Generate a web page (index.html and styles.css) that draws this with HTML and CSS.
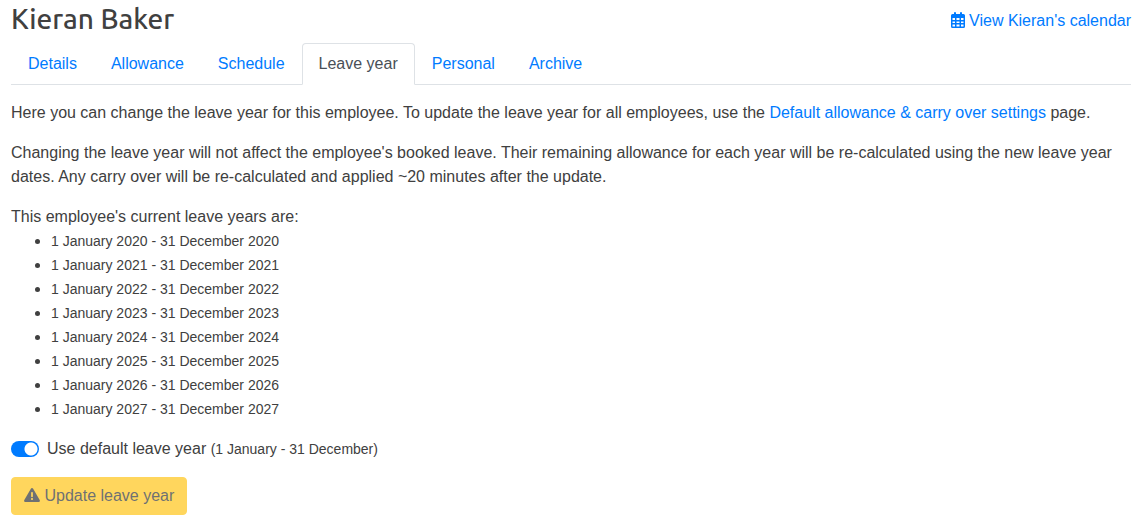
FILE: index.html
```html
<!DOCTYPE html>
<html lang="en">
<head>
    <meta charset="utf-8">
    <meta name="viewport" content="width=device-width, initial-scale=1">
    <title>Kieran Baker - Leave year</title>
    <link rel="stylesheet" href="styles.css">
</head>
<body>
    <header class="page-header">
        <h1>Kieran Baker</h1>
        <a class="calendar-link" href="#calendar">
            <svg class="icon-calendar" viewBox="0 0 14 16" aria-hidden="true">
                <path fill="currentColor" fill-rule="evenodd" d="M3 1a1 1 0 0 1 2 0v1h4V1a1 1 0 0 1 2 0v1h1.500A1.500 1.500 0 0 1 14 3.500V14.500a1.500 1.500 0 0 1-1.500 1.500h-11A1.500 1.500 0 0 1 0 14.500V3.500A1.500 1.500 0 0 1 1.500 2H3zM1.500 6v2H4V6zM5.500 6v2h3V6zM10 6v2h2.500V6zM1.500 9.500v1.500H4V9.500zM5.500 9.500v1.500h3V9.500zM10 9.500v1.500h2.500V9.500zM1.500 12.500v2H4v-2zM5.500 12.500v2h3v-2zM10 12.500v2h2.500v-2z"/>
            </svg>
            View Kieran's calendar
        </a>
    </header>

    <nav class="tabs">
        <a class="tab" href="#details">Details</a>
        <a class="tab" href="#allowance">Allowance</a>
        <a class="tab" href="#schedule">Schedule</a>
        <a class="tab active" href="#leave-year" aria-current="page">Leave year</a>
        <a class="tab" href="#personal">Personal</a>
        <a class="tab" href="#archive">Archive</a>
    </nav>

    <main>
        <p>Here you can change the leave year for this employee. To update the leave year for all employees, use the <a href="#settings">Default allowance &amp; carry over settings</a> page.</p>
        <p>Changing the leave year will not affect the employee's booked leave. Their remaining allowance for each year will be re-calculated using the new leave year dates. Any carry over will be re-calculated and applied ~20 minutes after the update.</p>

        <div>This employee's current leave years are:</div>
        <ul class="leave-years">
            <li><small>1 January 2020 - 31 December 2020</small></li>
            <li><small>1 January 2021 - 31 December 2021</small></li>
            <li><small>1 January 2022 - 31 December 2022</small></li>
            <li><small>1 January 2023 - 31 December 2023</small></li>
            <li><small>1 January 2024 - 31 December 2024</small></li>
            <li><small>1 January 2025 - 31 December 2025</small></li>
            <li><small>1 January 2026 - 31 December 2026</small></li>
            <li><small>1 January 2027 - 31 December 2027</small></li>
        </ul>

        <form>
            <div class="switch">
                <input type="checkbox" id="default-year" checked>
                <label for="default-year">Use default leave year <small>(1 January - 31 December)</small></label>
            </div>
            <button class="btn" type="submit" disabled>
                <svg class="icon-warning" viewBox="0 0 576 512" aria-hidden="true">
                    <path fill="currentColor" d="M569.500 440c18.500 32-4.700 72-41.600 72H48.100c-36.900 0-60-40.100-41.600-72L246.400 24c18.500-32 64.700-32 83.200 0l239.900 416zM288 370c-20 0-36 16-36 36s16 36 36 36 36-16 36-36-16-36-36-36zm-32-202v144c0 14 12 24 32 24s32-10 32-24V168c0-14-12-24-32-24s-32 10-32 24z"/>
                </svg>
                Update leave year
            </button>
        </form>
    </main>
</body>
</html>
```
FILE: styles.css
```css
* {
    box-sizing: border-box;
}

body {
    margin: 0;
    padding: 2px 7px 12px 11px;
    background: #fff;
    color: #404040;
    font-family: "Liberation Sans", Arial, sans-serif;
    font-size: 16px;
    line-height: 24px;
}

a {
    color: #007bff;
    text-decoration: none;
}

a:hover {
    text-decoration: underline;
}

small {
    font-size: 14px;
}

.page-header {
    display: flex;
    justify-content: space-between;
    align-items: center;
    margin-bottom: 7px;
}

h1 {
    margin: 0;
    font-family: Ubuntu, "Noto Sans", sans-serif;
    font-size: 28px;
    font-weight: 500;
    line-height: 34px;
}

.calendar-link {
    padding-top: 3px;
}

.icon-calendar {
    width: 14px;
    height: 16px;
    vertical-align: -2px;
}

.tabs {
    display: flex;
    margin-bottom: 16px;
    border-bottom: 1px solid #dee2e6;
}

.tab {
    margin-bottom: -1px;
    padding: 8px 16px;
    border: 1px solid transparent;
    border-radius: 4px 4px 0 0;
}

.tab.active {
    border-color: #dee2e6 #dee2e6 #fff;
    background: #fff;
    color: #495057;
}

p {
    margin: 0 0 16px;
}

.leave-years {
    margin: 0 0 16px;
    padding-left: 40px;
}

.switch {
    display: flex;
    align-items: center;
    gap: 8px;
    margin-bottom: 16px;
}

.switch input {
    appearance: none;
    width: 28px;
    height: 16px;
    margin: 0;
    border-radius: 8px;
    background: radial-gradient(circle at 20px 8px, #fff 6px, transparent 7px) #007bff;
}

.btn {
    padding: 6px 12px;
    border: 1px solid #ffc107;
    border-radius: 4px;
    background: #ffc107;
    color: #212529;
    font: inherit;
    opacity: 0.65;
}

.icon-warning {
    width: 16px;
    height: 14px;
    vertical-align: -1px;
}
```
